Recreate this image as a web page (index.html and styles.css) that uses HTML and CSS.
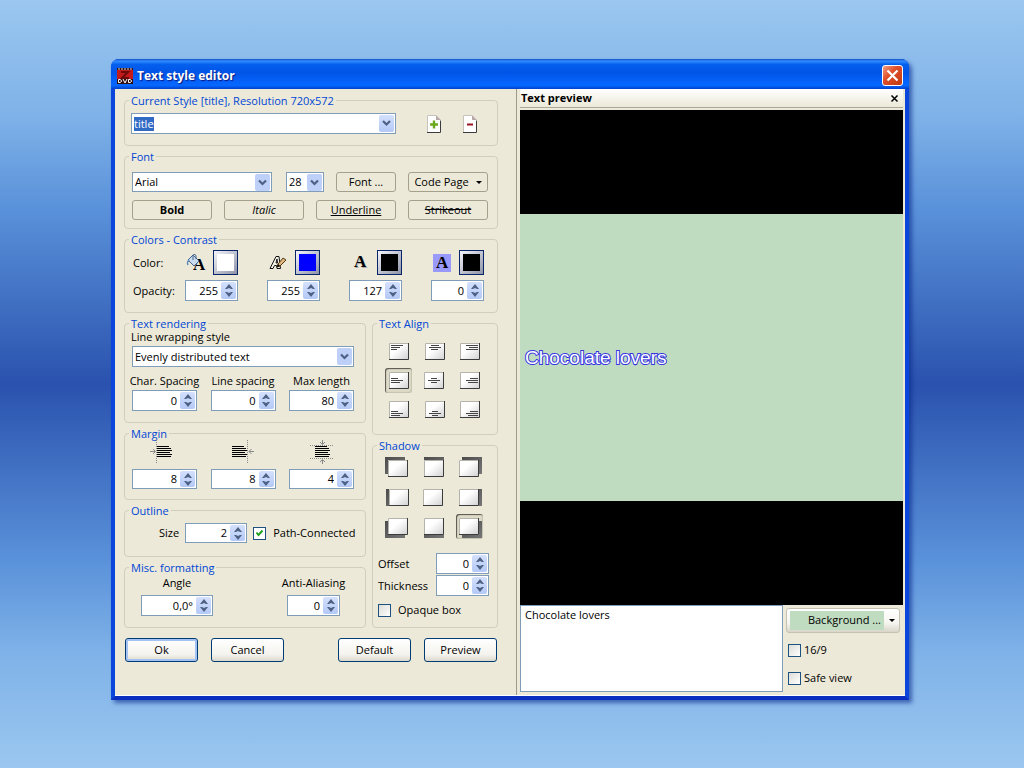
FILE: index.html
```html
<!DOCTYPE html>
<html lang="en">
<head>
    <meta charset="UTF-8">
    <meta name="viewport" content="width=device-width, initial-scale=1.0">
    <title>Text style editor</title>
    <link rel="stylesheet" href="styles.css">
</head>
<body>
    <!-- shared icon parts -->
    <svg class="defs" aria-hidden="true">
        <defs>
            <linearGradient id="paper" x1="0" y1="0" x2="1" y2="1">
                <stop offset="0.4" stop-color="#fff"/>
                <stop offset="1" stop-color="#cfcfcf"/>
            </linearGradient>
            <linearGradient id="shade" x1="0" y1="0" x2="1" y2="1">
                <stop offset="0" stop-color="#4c4c4c"/>
                <stop offset="1" stop-color="#777"/>
            </linearGradient>
            <symbol id="page" viewBox="0 0 20 17">
                <rect width="20" height="17" fill="url(#paper)"/>
                <path d="M0.5 17V0.5H20" fill="none" stroke="#b4b4ac"/>
                <path d="M19.5 0V16.5H0" fill="none" stroke="#3c3c3c"/>
            </symbol>
            <symbol id="sheet" viewBox="0 0 14 18">
                <path d="M0 0H9L14 5V18H0Z" fill="#fff"/>
                <path d="M0.5 18V0.5H9" fill="none" stroke="#c4c4bc"/>
                <path d="M13.5 5.5V17.5H0" fill="none" stroke="#3c3c3c"/>
                <path d="M9 0L14 5H9Z" fill="#b9a9a9"/>
            </symbol>
            <symbol id="up" viewBox="0 0 8 5"><path d="M0 5L4 0L8 5L6 5L4 4L2 5Z" fill="#4d6185"/></symbol>
            <symbol id="down" viewBox="0 0 8 5"><path d="M0 0L4 5L8 0L6 0L4 1L2 0Z" fill="#4d6185"/></symbol>
            <symbol id="chevron" viewBox="0 0 9 7"><path d="M1 1L4.500 4.500L8 1" fill="none" stroke="#4d6185" stroke-width="2.200"/></symbol>
        </defs>
    </svg>

    <div class="window">
        <div class="title-bar">
            <svg class="app-icon" width="16" height="16" viewBox="0 0 16 16">
                <rect width="16" height="16" fill="#301010"/>
                <rect y="2" width="16" height="9" fill="#c41a1a"/>
                <path d="M4 4H11L5 10H12" fill="none" stroke="#6d0b0b" stroke-width="2"/>
                <path d="M1 1H3M4 1H6M7 1H9M10 1H12M13 1H15" stroke="#ddd"/>
                <path d="M1.500 11.500V14.500H3L4.500 13.500V12.500L3 11.500ZM6 11L8 15L10 11M11.500 11.500V14.500H13L14.500 13.500V12.500L13 11.500Z" fill="none" stroke="#fff"/>
            </svg>
            <h1>Text style editor</h1>
            <button class="window-close" aria-label="Close window">
                <svg width="13" height="13" viewBox="0 0 13 13"><path d="M1.500 1.500L11.500 11.500M11.500 1.500L1.500 11.500" stroke="#fff" stroke-width="2.200"/></svg>
            </button>
        </div>

        <div class="content">
            <form class="editor">
                <fieldset class="style-group">
                    <legend>Current Style [title], Resolution 720x572</legend>
                    <div class="combo style-combo">
                        <input type="text" id="styleName" value="title" aria-label="Style">
                        <button type="button" aria-label="Open style list"><svg width="9" height="7"><use href="#chevron"/></svg></button>
                    </div>
                    <button type="button" class="icon-button" aria-label="Add style">
                        <svg width="14" height="18"><use href="#sheet"/><path d="M3 9.500H11M7 5.500V13.500" stroke="#6ca81e" stroke-width="2.400"/></svg>
                    </button>
                    <button type="button" class="icon-button" aria-label="Remove style">
                        <svg width="14" height="18"><use href="#sheet"/><path d="M4 9.500H10" stroke="#9c1420" stroke-width="2"/></svg>
                    </button>
                </fieldset>

                <fieldset class="font-group">
                    <legend>Font</legend>
                    <div class="font-row">
                        <select class="font-name" aria-label="Font name"><option>Arial</option></select>
                        <select class="font-size" aria-label="Font size"><option>28</option></select>
                        <button type="button" class="flat font-button">Font ...</button>
                        <button type="button" class="flat">Code Page <svg width="6" height="3"><path d="M0 0H6L3 3Z"/></svg></button>
                    </div>
                    <div class="font-row">
                        <button type="button" class="flat bold">Bold</button>
                        <button type="button" class="flat italic">Italic</button>
                        <button type="button" class="flat underline">Underline</button>
                        <button type="button" class="flat strikeout">Strikeout</button>
                    </div>
                </fieldset>

                <fieldset class="color-group">
                    <legend>Colors - Contrast</legend>
                    <div class="color-row">
                        <span class="row-label">Color:</span>
                        <div class="color-cell">
                            <svg width="18" height="18" viewBox="0 0 18 18">
                                <text x="6" y="16" class="glyph">A</text>
                                <path d="M6 1L12 7L7 12L1 6Z" fill="#c9dcef" stroke="#46648c"/>
                                <path d="M6 6V1.500C6 0 9 0 9 2V5" fill="none" stroke="#46648c"/>
                                <path d="M2 6C0 8 0 9 1 11" fill="none" stroke="#5b86ba" stroke-width="1.500"/>
                            </svg>
                            <button type="button" class="swatch white" aria-label="Text color"></button>
                        </div>
                        <div class="color-cell">
                            <svg width="18" height="18" viewBox="0 0 18 18">
                                <path d="M1 14.500L7 2.500H10L11.500 14.500H8L7.500 11.500H5.500L4 14.500ZM7 9L8 5L8.500 9Z" fill="#f4f2e6" stroke="#111"/>
                                <path d="M8 13L9 10L14 4L17 6L11 12Z" fill="#dfb77c" stroke="#503818"/>
                                <path d="M8 13L9 10L11 12Z"/>
                            </svg>
                            <button type="button" class="swatch blue" aria-label="Outline color"></button>
                        </div>
                        <div class="color-cell">
                            <svg width="18" height="18" viewBox="0 0 18 18">
                                <text x="4" y="14" class="glyph glyph-shadow">A</text>
                                <text x="3" y="13" class="glyph">A</text>
                            </svg>
                            <button type="button" class="swatch black" aria-label="Shadow color"></button>
                        </div>
                        <div class="color-cell">
                            <svg width="18" height="18" viewBox="0 0 18 18">
                                <rect width="18" height="18" fill="#9999fb"/>
                                <text x="3" y="14" class="glyph">A</text>
                            </svg>
                            <button type="button" class="swatch black" aria-label="Background color"></button>
                        </div>
                    </div>
                    <div class="color-row">
                        <span class="row-label">Opacity:</span>
                        <div class="spinner small"><input type="text" value="255" aria-label="Text opacity"><span class="arrows"><button type="button" aria-label="Up"><svg><use href="#up"/></svg></button><button type="button" aria-label="Down"><svg><use href="#down"/></svg></button></span></div>
                        <div class="spinner small"><input type="text" value="255" aria-label="Outline opacity"><span class="arrows"><button type="button" aria-label="Up"><svg><use href="#up"/></svg></button><button type="button" aria-label="Down"><svg><use href="#down"/></svg></button></span></div>
                        <div class="spinner small"><input type="text" value="127" aria-label="Shadow opacity"><span class="arrows"><button type="button" aria-label="Up"><svg><use href="#up"/></svg></button><button type="button" aria-label="Down"><svg><use href="#down"/></svg></button></span></div>
                        <div class="spinner small"><input type="text" value="0" aria-label="Background opacity"><span class="arrows"><button type="button" aria-label="Up"><svg><use href="#up"/></svg></button><button type="button" aria-label="Down"><svg><use href="#down"/></svg></button></span></div>
                    </div>
                </fieldset>

                <div class="columns">
                    <div class="column-left">
                        <fieldset class="render-group">
                            <legend>Text rendering</legend>
                            <label for="wrapStyle">Line wrapping style</label>
                            <select id="wrapStyle"><option>Evenly distributed text</option></select>
                            <div class="field-row">
                                <div class="field">
                                    <label for="charSpacing">Char. Spacing</label>
                                    <div class="spinner"><input type="text" id="charSpacing" value="0"><span class="arrows"><button type="button" aria-label="Up"><svg><use href="#up"/></svg></button><button type="button" aria-label="Down"><svg><use href="#down"/></svg></button></span></div>
                                </div>
                                <div class="field">
                                    <label for="lineSpacing">Line spacing</label>
                                    <div class="spinner"><input type="text" id="lineSpacing" value="0"><span class="arrows"><button type="button" aria-label="Up"><svg><use href="#up"/></svg></button><button type="button" aria-label="Down"><svg><use href="#down"/></svg></button></span></div>
                                </div>
                                <div class="field">
                                    <label for="maxLength">Max length</label>
                                    <div class="spinner"><input type="text" id="maxLength" value="80"><span class="arrows"><button type="button" aria-label="Up"><svg><use href="#up"/></svg></button><button type="button" aria-label="Down"><svg><use href="#down"/></svg></button></span></div>
                                </div>
                            </div>
                        </fieldset>

                        <fieldset class="margin-group">
                            <legend>Margin</legend>
                            <div class="field-row">
                                <div class="field">
                                    <svg width="32" height="24" viewBox="0 0 32 24">
                                        <path d="M7.500 0V24" stroke="#888" stroke-dasharray="1 1"/>
                                        <path d="M1 11.500H6M4 9L6.500 11.500L4 14" fill="none" stroke="#888"/>
                                        <path d="M8 6.500H20M8 8.500H22M8 10.500H23M8 12.500H21M8 14.500H23M8 16.500H22" stroke="#000"/>
                                    </svg>
                                    <div class="spinner low"><input type="text" value="8" aria-label="Left margin"><span class="arrows"><button type="button" aria-label="Up"><svg><use href="#up"/></svg></button><button type="button" aria-label="Down"><svg><use href="#down"/></svg></button></span></div>
                                </div>
                                <div class="field">
                                    <svg width="32" height="24" viewBox="0 0 32 24">
                                        <path d="M20.500 0V24" stroke="#888" stroke-dasharray="1 1"/>
                                        <path d="M27 11.500H22M24.500 9L22 11.500L24.500 14" fill="none" stroke="#888"/>
                                        <path d="M5 6.500H17M5 8.500H19M5 10.500H20M5 12.500H18M5 14.500H20M5 16.500H19" stroke="#000"/>
                                    </svg>
                                    <div class="spinner low"><input type="text" value="8" aria-label="Right margin"><span class="arrows"><button type="button" aria-label="Up"><svg><use href="#up"/></svg></button><button type="button" aria-label="Down"><svg><use href="#down"/></svg></button></span></div>
                                </div>
                                <div class="field">
                                    <svg width="32" height="24" viewBox="0 0 32 24">
                                        <path d="M4 5.500H28M4 18.500H28" stroke="#888" stroke-dasharray="1 1"/>
                                        <path d="M16.500 0V4M14 2L16.500 4.500L19 2M16.500 24V20M14 22L16.500 19.500L19 22" fill="none" stroke="#888"/>
                                        <path d="M9 6.500H21M9 8.500H23M9 10.500H24M9 12.500H22M9 14.500H24M9 16.500H23" stroke="#000"/>
                                    </svg>
                                    <div class="spinner low"><input type="text" value="4" aria-label="Vertical margin"><span class="arrows"><button type="button" aria-label="Up"><svg><use href="#up"/></svg></button><button type="button" aria-label="Down"><svg><use href="#down"/></svg></button></span></div>
                                </div>
                            </div>
                        </fieldset>

                        <fieldset class="outline-group">
                            <legend>Outline</legend>
                            <div class="outline-row">
                                <label for="outlineSize">Size</label>
                                <div class="spinner low"><input type="text" id="outlineSize" value="2"><span class="arrows"><button type="button" aria-label="Up"><svg><use href="#up"/></svg></button><button type="button" aria-label="Down"><svg><use href="#down"/></svg></button></span></div>
                                <label class="check"><input type="checkbox" checked>Path-Connected</label>
                            </div>
                        </fieldset>

                        <fieldset class="misc-group">
                            <legend>Misc. formatting</legend>
                            <div class="misc-row">
                                <div class="field wide">
                                    <label for="angle">Angle</label>
                                    <div class="spinner"><input type="text" id="angle" value="0,0°"><span class="arrows"><button type="button" aria-label="Up"><svg><use href="#up"/></svg></button><button type="button" aria-label="Down"><svg><use href="#down"/></svg></button></span></div>
                                </div>
                                <div class="field narrow">
                                    <label for="antiAlias">Anti-Aliasing</label>
                                    <div class="spinner"><input type="text" id="antiAlias" value="0"><span class="arrows"><button type="button" aria-label="Up"><svg><use href="#up"/></svg></button><button type="button" aria-label="Down"><svg><use href="#down"/></svg></button></span></div>
                                </div>
                            </div>
                        </fieldset>
                    </div>

                    <div class="column-right">
                        <fieldset class="align-group">
                            <legend>Text Align</legend>
                            <div class="button-grid">
                                <button type="button" aria-label="Top left"><svg><use href="#page" x="4" y="4" width="20" height="17"/><path class="lines" d="M6 6.500H18M6 8.500H15M6 10.500H12"/></svg></button>
                                <button type="button" aria-label="Top center"><svg><use href="#page" x="4" y="4" width="20" height="17"/><path class="lines" d="M10 6.500H18M8 8.500H20M10 10.500H17"/></svg></button>
                                <button type="button" aria-label="Top right"><svg><use href="#page" x="3" y="4" width="20" height="17"/><path class="lines" d="M9 6.500H21M12 8.500H21M9 10.500H21"/></svg></button>
                                <button type="button" class="pressed" aria-label="Middle left"><svg><use href="#page" x="4" y="4" width="20" height="17"/><path class="lines" d="M6 10.500H13M6 12.500H18M6 14.500H15"/></svg></button>
                                <button type="button" aria-label="Middle center"><svg><use href="#page" x="3" y="4" width="20" height="17"/><path class="lines" d="M10 10.500H16M7 12.500H19M10 14.500H16"/></svg></button>
                                <button type="button" aria-label="Middle right"><svg><use href="#page" x="3" y="4" width="20" height="17"/><path class="lines" d="M13 10.500H21M9 12.500H21M11 14.500H21"/></svg></button>
                                <button type="button" aria-label="Bottom left"><svg><use href="#page" x="4" y="4" width="20" height="17"/><path class="lines" d="M6 14.500H13M6 16.500H18M6 18.500H15"/></svg></button>
                                <button type="button" aria-label="Bottom center"><svg><use href="#page" x="4" y="4" width="20" height="17"/><path class="lines" d="M11 14.500H17M8 16.500H20M11 18.500H17"/></svg></button>
                                <button type="button" aria-label="Bottom right"><svg><use href="#page" x="3" y="4" width="20" height="17"/><path class="lines" d="M13 14.500H21M9 16.500H21M11 18.500H21"/></svg></button>
                            </div>
                        </fieldset>

                        <fieldset class="shadow-group">
                            <legend>Shadow</legend>
                            <div class="button-grid">
                                <button type="button" aria-label="Top left"><svg><rect class="cast" x="1" y="1"/><use href="#page" x="4" y="4" width="20" height="17"/></svg></button>
                                <button type="button" aria-label="Top"><svg><rect class="cast" x="4" y="1"/><use href="#page" x="4" y="4" width="20" height="17"/></svg></button>
                                <button type="button" aria-label="Top right"><svg><rect class="cast" x="6" y="1"/><use href="#page" x="3" y="4" width="20" height="17"/></svg></button>
                                <button type="button" aria-label="Left"><svg><rect class="cast" x="2" y="4"/><use href="#page" x="5" y="4" width="20" height="17"/></svg></button>
                                <button type="button" aria-label="None"><svg><use href="#page" x="3" y="4" width="20" height="17"/></svg></button>
                                <button type="button" aria-label="Right"><svg><rect class="cast" x="6" y="4"/><use href="#page" x="3" y="4" width="20" height="17"/></svg></button>
                                <button type="button" aria-label="Bottom left"><svg><rect class="cast" x="1" y="7"/><use href="#page" x="4" y="4" width="20" height="17"/></svg></button>
                                <button type="button" aria-label="Bottom"><svg><rect class="cast" x="4" y="7"/><use href="#page" x="4" y="4" width="20" height="17"/></svg></button>
                                <button type="button" class="pressed" aria-label="Bottom right"><svg><rect class="cast" x="6" y="7"/><use href="#page" x="3" y="4" width="20" height="17"/></svg></button>
                            </div>
                            <div class="setting">
                                <label for="offset">Offset</label>
                                <div class="spinner small"><input type="text" id="offset" value="0"><span class="arrows"><button type="button" aria-label="Up"><svg><use href="#up"/></svg></button><button type="button" aria-label="Down"><svg><use href="#down"/></svg></button></span></div>
                            </div>
                            <div class="setting">
                                <label for="thickness">Thickness</label>
                                <div class="spinner small"><input type="text" id="thickness" value="0"><span class="arrows"><button type="button" aria-label="Up"><svg><use href="#up"/></svg></button><button type="button" aria-label="Down"><svg><use href="#down"/></svg></button></span></div>
                            </div>
                            <label class="check"><input type="checkbox">Opaque box</label>
                        </fieldset>
                    </div>
                </div>

                <div class="actions">
                    <button type="button" class="xp default">Ok</button>
                    <button type="button" class="xp">Cancel</button>
                    <button type="button" class="xp push">Default</button>
                    <button type="button" class="xp">Preview</button>
                </div>
            </form>

            <div class="preview">
                <div class="preview-header">
                    <h2>Text preview</h2>
                    <button aria-label="Close preview"><svg width="7" height="7"><path d="M0.500 0.500L6.500 6.500M6.500 0.500L0.500 6.500" stroke="#000" stroke-width="1.500"/></svg></button>
                </div>
                <div class="screen">
                    <div class="picture"><span class="subtitle">Chocolate lovers</span></div>
                </div>
                <div class="preview-footer">
                    <textarea aria-label="Sample text">Chocolate lovers</textarea>
                    <div class="preview-options">
                        <button class="background-button"><span>Background ...</span><svg width="6" height="3"><path d="M0 0H6L3 3Z"/></svg></button>
                        <label class="check"><input type="checkbox">16/9</label>
                        <label class="check"><input type="checkbox">Safe view</label>
                    </div>
                </div>
            </div>
        </div>
    </div>

    <script>
        const styleName = document.getElementById('styleName');
        styleName.focus();
        styleName.select();
    </script>
</body>
</html>
```

FILE: styles.css
```css
* {
    box-sizing: border-box;
}

body {
    margin: 0;
    min-height: 100vh;
    padding: 59px 115px 68px 111px;
    background: linear-gradient(#9bc7f0 0%, #7fb2e8 15%, #5a92da 27%, #2a52ae 50%, #5a92da 73%, #7fb2e8 85%, #9bc7f0 100%);
    color: #000;
    font-family: 'Open Sans', 'Noto Sans', sans-serif;
    font-size: 11px;
    line-height: 14px;
}

button, input, select, textarea {
    margin: 0;
    padding: 0;
    color: inherit;
    font: inherit;
    outline: none;
}

button {
    border: none;
    background: none;
}

svg {
    display: block;
    overflow: visible;
}

.defs {
    position: absolute;
    width: 0;
    height: 0;
}

.window {
    border: 4px solid #0a45dc;
    border-top: none;
    border-radius: 8px 8px 0 0;
    border-bottom-color: #0a2fc0;
    background: #0a45dc;
    box-shadow: 3px 3px 4px rgba(10, 40, 140, 0.6);
}

.title-bar {
    display: flex;
    align-items: center;
    gap: 4px;
    height: 30px;
    margin: 0 -4px;
    padding: 3px 6px 0;
    border-radius: 8px 8px 0 0;
    background: linear-gradient(#1450c8 0%, #2f8cff 7%, #0560ee 18%, #0054e6 45%, #0560f8 70%, #0668ff 88%, #0040cc 100%);
    color: #fff;
}

.title-bar h1 {
    flex: 1;
    margin: 0;
    font-size: 12px;
    line-height: 16px;
    text-shadow: 1px 1px 1px #0a1883;
}

.window-close {
    display: grid;
    place-items: center;
    width: 21px;
    height: 21px;
    border: 1px solid #fff;
    border-radius: 3px;
    background: linear-gradient(135deg, #f0a088, #e0502a 40%, #c03a10);
}

.content {
    display: flex;
    background: #ece9d8;
    border-bottom: 1px solid #fff;
}

/* left side */
.editor {
    display: flex;
    flex-direction: column;
    gap: 4px;
    width: 401px;
    padding: 5px 18px 33px 9px;
}

fieldset {
    min-width: 0;
    margin: 0;
    border: 1px solid #d0cfbb;
    border-radius: 4px;
}

legend {
    margin-left: -2px;
    padding: 0 2px;
    color: #0046d5;
    line-height: 13px;
}

.style-group {
    display: flex;
    align-items: center;
    padding: 6px 9px 11px 6px;
}

.style-combo {
    flex: 1;
    margin-right: 20px;
}

.combo {
    display: flex;
    height: 21px;
    padding: 1px;
    border: 1px solid #7f9db9;
    background: #fff;
}

.combo input {
    flex: 1;
    min-width: 0;
    padding-left: 1px;
    border: none;
}

.combo input::selection {
    background: #316ac5;
    color: #fff;
}

.combo button {
    display: grid;
    place-items: center;
    width: 15px;
    border-radius: 2px;
    background: linear-gradient(#d4e0fd, #b4c9f6);
}

.icon-button {
    display: grid;
    place-items: center;
    width: 36px;
    height: 21px;
}

select {
    height: 21px;
    padding-left: 2px;
    border: 1px solid #7f9db9;
    border-radius: 0;
    appearance: none;
    background: #fff url("data:image/svg+xml,%3Csvg xmlns='http://www.w3.org/2000/svg' width='15' height='17'%3E%3Crect width='15' height='17' rx='2' fill='%23bfd0f8'/%3E%3Cpath d='M4 6.500L7.500 10L11 6.500' fill='none' stroke='%234d6185' stroke-width='2.200'/%3E%3C/svg%3E") no-repeat right 1px center;
}

.font-group {
    display: flex;
    flex-direction: column;
    gap: 8px;
    padding: 9px 9px 8px 6px;
}

.font-row {
    display: flex;
    justify-content: space-between;
    gap: 12px;
    margin-left: 1px;
}

.font-row select {
    height: 20px;
}

.font-name {
    flex: 1;
    margin-right: 2px;
}

.font-size {
    width: 38px;
}

.flat {
    display: flex;
    align-items: center;
    justify-content: center;
    gap: 7px;
    width: 80px;
    height: 20px;
    border: 1px solid #a3a08c;
    border-radius: 3px;
}

.font-button {
    width: 60px;
}

.bold {
    font-weight: bold;
}

.italic {
    font-style: italic;
}

.underline {
    text-decoration: underline;
}

.strikeout {
    text-decoration: line-through;
}

.color-group {
    display: flex;
    flex-direction: column;
    gap: 5px;
    padding: 4px 13px 11px 6px;
}

.color-row {
    display: flex;
    align-items: center;
    justify-content: space-between;
    margin-left: 2px;
}

.row-label {
    width: 23px;
    white-space: nowrap;
}

.color-cell {
    display: flex;
    align-items: center;
    justify-content: flex-end;
    gap: 8px;
    width: 53px;
}

.glyph {
    font: bold 17px 'Liberation Serif', serif;
}

.glyph-shadow {
    fill: #aaa;
}

.swatch {
    width: 25px;
    height: 25px;
    padding: 3px;
    border: 1px solid #0a2468;
    background: linear-gradient(135deg, #f4f5fa, #8d93a8);
}

.swatch::after {
    content: '';
    display: block;
    height: 17px;
}

.white::after {
    background: #fff;
}

.blue::after {
    background: #00f;
}

.black::after {
    background: #000;
}

.spinner {
    display: flex;
    width: 65px;
    height: 21px;
    padding: 1px;
    border: 1px solid #7f9db9;
    background: #fff;
}

.spinner.small {
    width: 53px;
}

.spinner.low {
    height: 20px;
}

.spinner input {
    flex: 1;
    min-width: 0;
    padding-right: 3px;
    border: none;
    background: none;
    text-align: right;
}

.arrows {
    display: flex;
    flex-direction: column;
    width: 15px;
    border-radius: 2px;
    background: linear-gradient(#d4e0fd, #b4c9f6);
}

.arrows button {
    display: grid;
    place-items: center;
    flex: 1;
    min-height: 0;
}

.arrows svg {
    width: 8px;
    height: 5px;
}

.columns {
    display: flex;
    gap: 6px;
}

.column-left, .column-right {
    display: flex;
    flex-direction: column;
    gap: 4px;
}

.column-left {
    flex: 1;
    min-width: 0;
}

.column-right {
    width: 126px;
}

.field-row {
    display: flex;
    justify-content: space-between;
    margin-left: 1px;
}

.field {
    display: flex;
    flex-direction: column;
    align-items: center;
    gap: 2px;
    width: 65px;
    white-space: nowrap;
}

.render-group {
    display: flex;
    flex-direction: column;
    padding: 0 11px 11px 6px;
}

.render-group select {
    margin: 2px 0 7px 1px;
}

.margin-group {
    padding: 0 11px 10px 6px;
}

.margin-group .field {
    gap: 5px;
}

.outline-group {
    padding: 6px 11px 13px 6px;
}

.outline-row {
    display: flex;
    align-items: center;
    gap: 6px;
    padding-left: 28px;
}

.outline-row .spinner {
    width: 62px;
}

.misc-group {
    padding: 2px 6px 11px;
}

.misc-row {
    display: flex;
    justify-content: space-between;
    padding: 0 19px 0 10px;
}

.misc-row .field {
    gap: 5px;
}

.misc-row .spinner {
    width: 100%;
}

.misc-row .wide {
    width: 72px;
}

.misc-row .narrow {
    width: 53px;
}

.check {
    display: flex;
    align-items: center;
    gap: 7px;
    white-space: nowrap;
}

.check input {
    width: 13px;
    height: 13px;
    border: 1px solid #1c5180;
    appearance: none;
    background: linear-gradient(135deg, #dcdcd7, #fff);
}

.check input:checked {
    background: #fff url("data:image/svg+xml,%3Csvg xmlns='http://www.w3.org/2000/svg' width='9' height='9'%3E%3Cpath d='M1.500 3.500L3.500 6L7.500 1.500' fill='none' stroke='%2321a121' stroke-width='2'/%3E%3C/svg%3E") no-repeat center;
}

.align-group {
    padding: 9px 6px 12px;
}

.button-grid {
    display: grid;
    grid-template-columns: repeat(3, 27px);
    gap: 4px 9px;
    margin-left: 6px;
}

.button-grid button {
    height: 25px;
}

.button-grid svg {
    width: 27px;
    height: 25px;
}

.button-grid .pressed {
    border-radius: 3px;
    background: #dddac8;
    box-shadow: inset 1px 1px 1px #55534a, inset -1px -1px 1px #c4c1b0;
}

.lines {
    stroke: #444;
}

.cast {
    width: 20px;
    height: 17px;
    fill: url(#shade);
}

.shadow-group {
    display: flex;
    flex-direction: column;
    gap: 1px;
    padding: 4px 8px 10px 5px;
}

.shadow-group legend {
    margin-left: -1px;
}

.shadow-group .button-grid {
    margin-bottom: 13px;
}

.shadow-group .check {
    margin-top: 6px;
}

.setting {
    display: flex;
    align-items: center;
    justify-content: space-between;
}

.actions {
    display: flex;
    gap: 13px;
    margin: 6px 1px 0;
}

.xp {
    width: 73px;
    height: 24px;
    border: 1px solid #003c74;
    border-radius: 3px;
    background: linear-gradient(#fff, #f4f3ee 70%, #dcd8cc);
}

.xp.default {
    box-shadow: inset 0 0 0 2px #a4c2f2;
}

.push {
    margin-left: auto;
}

/* right side */
.preview {
    display: flex;
    flex: 1;
    flex-direction: column;
    min-width: 0;
    padding: 0 2px 3px 3px;
    border-left: 1px solid #9d9a8b;
}

.preview-header {
    display: flex;
    align-items: center;
    justify-content: space-between;
    height: 19px;
    margin-bottom: 2px;
    padding: 0 5px 0 1px;
    background: linear-gradient(#fff, #ece9d8);
    border-bottom: 1px solid #aca899;
}

.preview-header h2 {
    margin: 0;
    font-size: 11px;
}

.screen {
    display: flex;
    flex: 1;
    flex-direction: column;
    justify-content: center;
    background: #000;
}

.picture {
    display: flex;
    align-items: center;
    height: 58%;
    padding-left: 5px;
    background: #c0dcc0;
}

.subtitle {
    color: #fff;
    font: 19px 'Liberation Sans', Arial, sans-serif;
    -webkit-text-stroke: 2px #3535e0;
    paint-order: stroke fill;
}

.preview-footer {
    display: flex;
    gap: 3px;
}

.preview-footer textarea {
    flex: 1;
    min-width: 0;
    height: 87px;
    padding: 2px 4px;
    border: 1px solid #7f9db9;
    resize: none;
}

.preview-options {
    display: flex;
    flex-direction: column;
    gap: 14px;
    width: 117px;
    padding: 3px 3px 0 0;
}

.preview-options .check {
    gap: 3px;
    margin-left: 2px;
}

.background-button {
    display: flex;
    align-items: center;
    justify-content: space-between;
    height: 25px;
    margin-bottom: -4px;
    padding: 0 4px 0 3px;
    border: 1px solid #c5c2b4;
    border-radius: 3px;
    background: linear-gradient(#fff, #f6f5f0 60%, #d8d5c8);
}

.background-button span {
    width: 94px;
    padding: 2px 3px 3px 0;
    background: #c0dcc0;
    text-align: right;
}
```
